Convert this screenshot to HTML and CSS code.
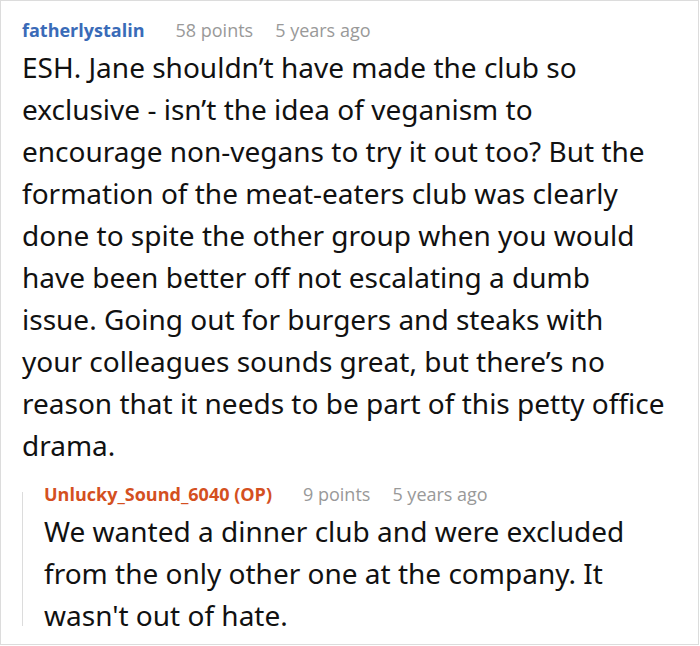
FILE: index.html
```html
<!DOCTYPE html>
<html>
<head>
<meta charset="utf-8">
<link rel="stylesheet" href="styles.css">
</head>
<body>
<div class="card">
  <div class="comment">
    <div class="meta">
      <span class="user">fatherlystalin</span>
      <span class="info">58 points</span>
      <span class="info">5 years ago</span>
    </div>
    <p class="text">ESH. Jane shouldn’t have made the club so<br>
exclusive - isn’t the idea of veganism to<br>
encourage non-vegans to try it out too? But the<br>
formation of the meat-eaters club was clearly<br>
done to spite the other group when you would<br>
have been better off not escalating a dumb<br>
issue. Going out for burgers and steaks with<br>
your colleagues sounds great, but there’s no<br>
reason that it needs to be part of this petty office<br>
drama.</p>
    <div class="reply">
      <div class="meta">
        <span class="user op">Unlucky_Sound_6040 (OP)</span>
        <span class="info">9 points</span>
        <span class="info">5 years ago</span>
      </div>
      <p class="text">We wanted a dinner club and were excluded<br>
from the only other one at the company. It<br>
wasn't out of hate.</p>
    </div>
  </div>
</div>
</body>
</html>
```

FILE: styles.css
```css
html, body {
  margin: 0;
  padding: 0;
  background: #fff;
}
.card {
  box-sizing: border-box;
  width: 699px;
  height: 645px;
  border: 1px solid #dcdcdc;
  padding: 16px 2px 0 21px;
  font-family: "Open Sans", "Noto Sans", sans-serif;
  overflow: hidden;
}
.meta {
  display: flex;
  align-items: baseline;
  gap: 22px;
  font-size: 18px;
  line-height: 26px;
}
.user {
  font-weight: 700;
  color: #3a6bb8;
}
.user.op {
  color: #d4501f;
}
.info {
  color: #999;
}
.meta .user {
  margin-right: 9px;
}
.text {
  margin: 3px 0 0;
  font-family: "Noto Sans", "Open Sans", sans-serif;
  font-size: 28px;
  line-height: 42px;
  color: #111;
}
.reply {
  margin-top: 15px;
  padding-left: 22px;
  background: linear-gradient(#dcdcdc, #dcdcdc) no-repeat 0 11px / 1px calc(100% - 21px);
}
```
